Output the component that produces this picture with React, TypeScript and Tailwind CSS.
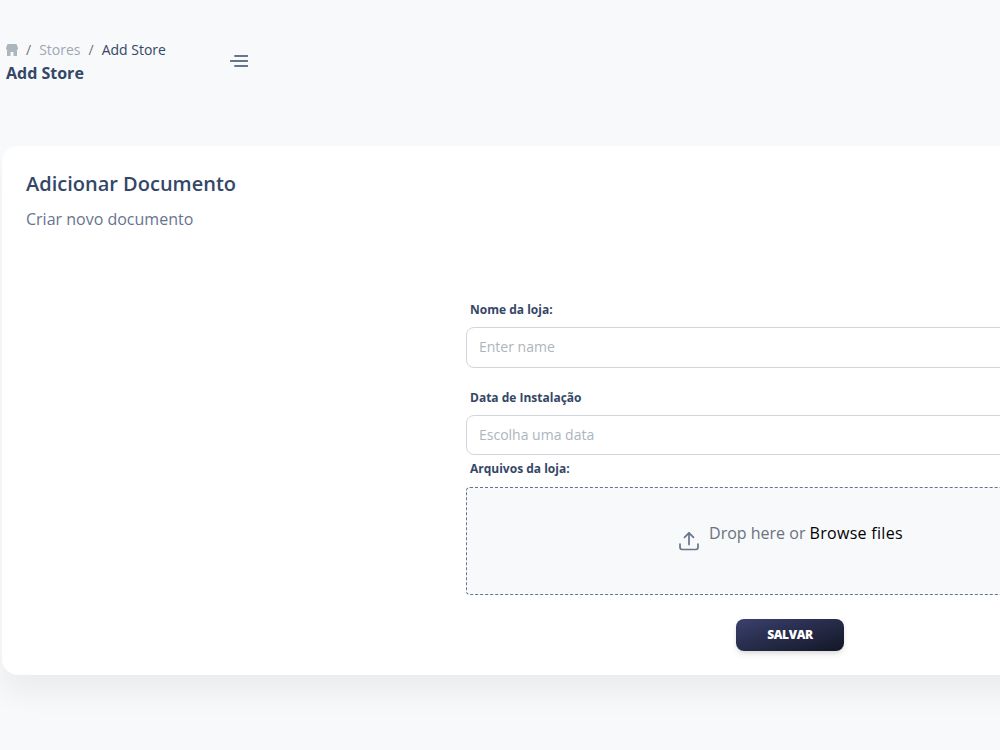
import React from "react";

function StoreIcon() {
  return (
    <svg width="12" height="12" viewBox="0 0 12 12" fill="#adb5bd">
      <path d="M1.500 0h9L12 4v1.200c-.3.300-.8.500-1 .5V12H7.500V8h-3v4H1V5.700c-.3 0-.7-.2-1-.5V4z" />
    </svg>
  );
}

function MenuIcon() {
  return (
    <svg width="18" height="12" viewBox="0 0 18 12" fill="none" stroke="#67748e" strokeWidth="1.800" strokeLinecap="round">
      <path d="M5 1h12.500" />
      <path d="M.5 6h17" />
      <path d="M5 11h12.500" />
    </svg>
  );
}

function UploadIcon() {
  return (
    <svg width="20" height="20" viewBox="0 0 20 20" fill="none" stroke="#67748e" strokeWidth="1.700" strokeLinecap="round" strokeLinejoin="round">
      <path d="M10 13.500V2" />
      <path d="M5.500 6.300 10 1.800l4.500 4.500" />
      <path d="M1 13v3.300c0 1.300 1 2.200 2.200 2.200h13.600c1.200 0 2.200-.9 2.200-2.200V13" />
    </svg>
  );
}

export default function App() {
  return (
    <div className="h-[750px] w-[1000px] overflow-hidden bg-[#f8f9fb] font-['Open_Sans',sans-serif]">
      <header className="flex h-[146px] items-start px-[6px] pt-[41px]">
        <div className="w-[224px]">
          <nav className="flex h-[18px] items-center text-[14px] leading-[18px]">
            <StoreIcon />
            <span className="ml-[8px] text-[#6c757d]">/</span>
            <span className="ml-[8px] text-[#9fa7b4]">Stores</span>
            <span className="ml-[8px] text-[#6c757d]">/</span>
            <span className="ml-[8px] text-[#344767]">Add Store</span>
          </nav>
          <h6 className="mt-[2px] text-[16px] leading-[24px] font-bold text-[#344767]">Add Store</h6>
        </div>
        <div className="mt-[14px]">
          <MenuIcon />
        </div>
      </header>

      <main className="ml-[2px] h-[529px] w-[1130px] rounded-2xl bg-white px-[24px] pt-[24px] shadow-[0_20px_27px_0_rgba(0,0,0,0.05)]">
        <h5 className="text-[20px] leading-[27px] font-semibold text-[#344767]">Adicionar Documento</h5>
        <p className="mt-[11px] text-[16px] leading-[22px] text-[#67748e]">Criar novo documento</p>

        <form className="mt-[71px] ml-[440px] w-[648px]">
          <label className="ml-[4px] block text-[12px] leading-[18px] font-bold text-[#344767]">Nome da loja:</label>
          <div className="mt-[8px] flex h-[41px] items-center rounded-[8px] border border-[#d2d6da] bg-white px-[12px] pb-[2px] text-[14px] text-[#adb5bd]">
            Enter name
          </div>
          <label className="mt-[21px] ml-[4px] block text-[12px] leading-[18px] font-bold text-[#344767]">Data de Instalação</label>
          <div className="mt-[8px] flex h-[40px] items-center rounded-[8px] border border-[#d2d6da] bg-white px-[12px] pb-[2px] text-[14px] text-[#adb5bd]">
            Escolha uma data
          </div>
          <label className="mt-[5px] ml-[4px] block text-[12px] leading-[18px] font-bold text-[#344767]">Arquivos da loja:</label>
          <div className="mt-[9px] flex h-[108px] items-start justify-center rounded-[4px] border border-dashed border-[#67748e] bg-[#f8f9fb] pt-[33px] pl-[2px]">
            <span className="mt-[10px] mr-[10px]">
              <UploadIcon />
            </span>
            <span className="text-[16px] leading-[24px] text-[#6b7280]">
              Drop here or <span className="font-medium tracking-[0.3px] text-black">Browse files</span>
            </span>
          </div>
          <div className="mt-[24px] flex justify-center">
            <button
              type="button"
              className="h-[32px] w-[108px] rounded-[8px] bg-gradient-to-br from-[#3a416f] to-[#141727] text-[12px] font-extrabold tracking-[-0.03em] text-white shadow-[0_4px_7px_-1px_rgba(0,0,0,0.11),0_2px_4px_-1px_rgba(0,0,0,0.07)]"
            >
              SALVAR
            </button>
          </div>
        </form>
      </main>
    </div>
  );
}
